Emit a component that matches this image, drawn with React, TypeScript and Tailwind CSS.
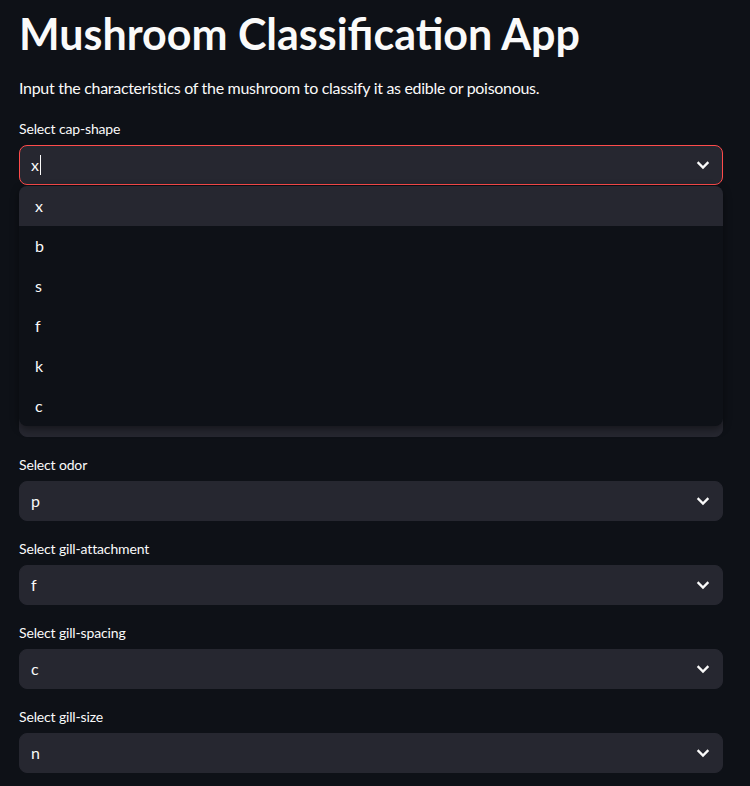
import React from "react";

const fields: { label: string; value: string; hidden?: boolean }[] = [
    { label: "cap-shape", value: "x" },
    { label: "cap-surface", value: "s", hidden: true },
    { label: "cap-color", value: "n", hidden: true },
    { label: "bruises", value: "t", hidden: true },
    { label: "odor", value: "p" },
    { label: "gill-attachment", value: "f" },
    { label: "gill-spacing", value: "c" },
    { label: "gill-size", value: "n" },
];

const options = ["x", "b", "s", "f", "k", "c"];

const Chevron = () => (
    <svg
        className="h-4 w-4 text-[#fafafa]"
        viewBox="0 0 16 16"
        fill="none"
        stroke="currentColor"
        strokeWidth="2.4"
    >
        <path d="M3.5 6l4.5 4.5L12.5 6" strokeLinecap="square" />
    </svg>
);

type SelectProps = { label: string; value: string; open?: boolean; hidden?: boolean };
const SelectBox = ({ label, value, open, hidden }: SelectProps) => {
    // rows under the open menu are covered, so no text is drawn for them
    return (
        <div className="relative">
            <div className="h-[20px] text-sm leading-[20px] mb-[6px] tracking-[-0.15px] text-[#fafafa]">
                {hidden ? "" : `Select ${label}`}
            </div>
            <div
                className={`flex items-center h-10 rounded-lg bg-[#262730] pl-[11px] pr-[11px] border ${
                    open ? "border-[#ff4b4b]" : "border-[#262730]"
                }`}
            >
                <div className="flex-1 flex items-center text-base text-[#fafafa]">
                    {hidden ? "" : value}
                    {open && <span className="ml-[1px] inline-block w-px h-[20px] bg-[#fafafa]" />}
                </div>
                <Chevron />
            </div>
            {open && (
                <div className="absolute left-0 right-0 top-[67px] z-10 rounded-lg bg-[#0e1117] overflow-hidden shadow-[0_3px_8px_rgba(0,0,0,0.45)]">
                    {options.map((o, i) => (
                        <div
                            key={o}
                            className={`h-10 flex items-center pl-4 text-base text-[#fafafa] ${
                                i === 0 ? "bg-[#262730]" : ""
                            }`}
                        >
                            {o}
                        </div>
                    ))}
                </div>
            )}
        </div>
    );
};

export default function App() {
    return (
        <div
            className="min-h-screen w-full bg-[#0e1117] text-[#fafafa] pl-[19px] pr-[27px]"
            style={{ fontFamily: "Lato, 'Noto Sans', sans-serif" }}
        >
            <h1 className="pt-[7px] text-[43px] leading-[53px] font-bold">
                Mushroom Classification App
            </h1>
            <p className="mt-[16px] text-base leading-[24px] tracking-[-0.3px]">
                Input the characteristics of the mushroom to classify it as edible or poisonous.
            </p>
            <div className="mt-[19px] flex flex-col gap-[18px]">
                {fields.map((f, i) => (
                    <SelectBox
                        key={f.label}
                        label={f.label}
                        value={f.value}
                        open={i === 0}
                        hidden={f.hidden}
                    />
                ))}
            </div>
        </div>
    );
}
